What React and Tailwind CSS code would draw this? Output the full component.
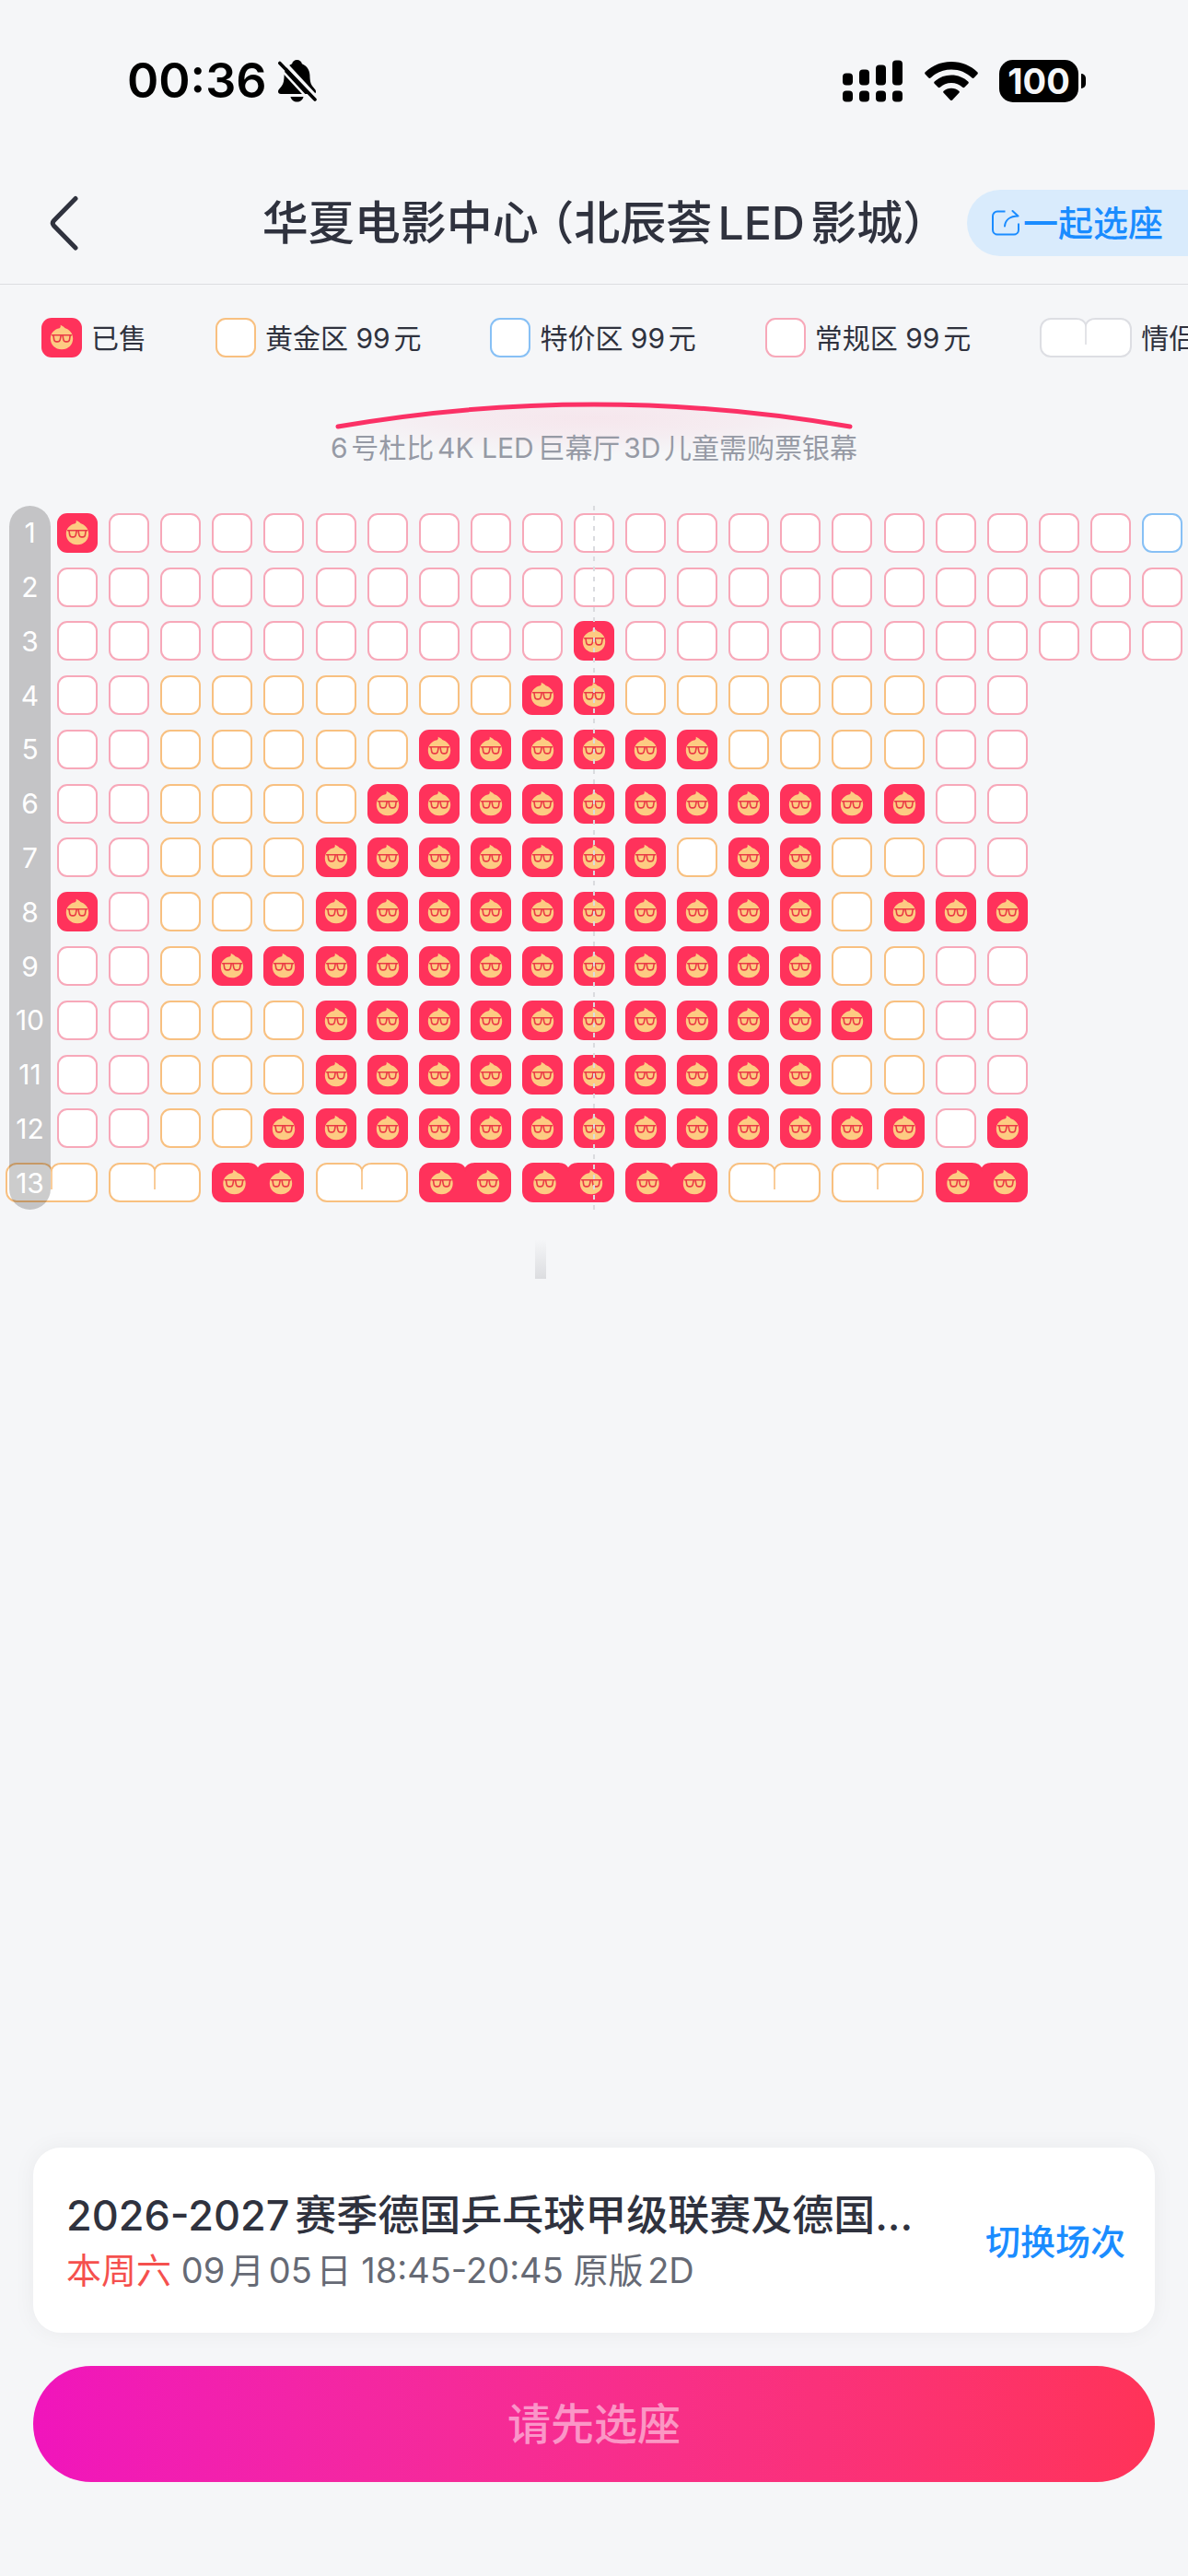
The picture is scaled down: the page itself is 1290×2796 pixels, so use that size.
import React, { useState } from 'react';
import clsx from 'clsx';

// n = regular, g = gold, s = special, x = sold
const ROWS = [
  'xnnnnnnnnnnnnnnnnnnnns',
  'nnnnnnnnnnnnnnnnnnnnnn',
  'nnnnnnnnnnxnnnnnnnnnnn',
  'nngggggggxxggggggnn',
  'nngggggxxxxxxggggnn',
  'nnggggxxxxxxxxxxxnn',
  'nngggxxxxxxxgxxggnn',
  'xngggxxxxxxxxxxgxxx',
  'nngxxxxxxxxxxxxggnn',
  'nngggxxxxxxxxxxxgnn',
  'nngggxxxxxxxxxxggnn',
  'nnggxxxxxxxxxxxxxnx',
];

// Last row holds couple seats, one letter for each pair
const COUPLE_ROW = 'ggxgxxxggx';

const SEAT_BORDER = {
  n: 'border-[#f7a8b9]',
  g: 'border-[#f8c080]',
  s: 'border-[#87c0f5]',
};

const SEAT_NAME = { n: '常规区', g: '黄金区', s: '特价区', x: '已售' };

const Face = ({ x = 0 }) => (
  <g transform={`translate(${x} 0)`}>
    <path
      d="M19.6 11.2C20.9 10.4 21 9.2 20.6 7.8C22.6 8.6 24.4 9.8 25.4 11.1C30 12.4 34.2 16.7 34.2 22.4C34.2 29.2 29 34.2 22.1 34.2C15.1 34.2 9.8 29.2 9.8 22.4C9.8 16.5 14.2 12.2 19.6 11.2Z"
      fill="#fdcb82"
    />
    <g fill="none" stroke="#ea3b46" strokeWidth="1.6" strokeLinejoin="round">
      <path d="M11.6 18.8H32.6" strokeLinecap="round" />
      <path d="M13 19L13.7 23.6Q14.1 25.9 16.4 25.9H17.6Q19.8 25.9 20.3 23.6L21.2 19" />
      <path d="M23 19L23.9 23.6Q24.4 25.9 26.6 25.9H27.8Q30.1 25.9 30.5 23.6L31.2 19" />
    </g>
  </g>
);

const Seat = ({ type, as: Tag = 'button', ...props }) => (
  <Tag
    className={clsx(
      'block h-[43px] w-11 shrink-0 overflow-hidden rounded-[11px]',
      type === 'x' ? 'bg-[#ff325b]' : 'border-2 bg-white',
      SEAT_BORDER[type]
    )}
    {...props}
  >
    {type === 'x' && (
      <svg viewBox="0 0 44 43" className="h-full w-full" aria-hidden="true">
        <Face />
      </svg>
    )}
  </Tag>
);

const CoupleShape = ({ sold, stroke }) => (
  <svg viewBox="0 0 100 43" className="h-[43px] w-[100px] shrink-0" aria-hidden="true">
    <path
      d="M12 1H39.500C45 1 48.500 3.500 50 7.500C51.500 3.500 55 1 60.500 1H88A11 11 0 0 1 99 12V31A11 11 0 0 1 88 42H12A11 11 0 0 1 1 31V12A11 11 0 0 1 12 1Z"
      fill={sold ? '#ff325b' : '#fff'}
      stroke={sold ? '#ff325b' : stroke}
      strokeWidth="2"
    />
    {sold ? (
      <>
        <Face x={2.5} />
        <Face x={53} />
      </>
    ) : (
      <path d="M50 7V29" stroke={stroke} strokeWidth="1.600" />
    )}
  </svg>
);

const StatusBar = () => (
  <div className="flex h-[176px] items-center justify-between pr-[111px] pl-[138px] text-black">
    <div className="flex items-center gap-3">
      <span className="text-[52px] leading-none font-semibold">00:36</span>
      <svg viewBox="0 0 42 46" className="h-[46px] w-[42px]" aria-label="静音">
        <path
          d="M20.500 0C17.700 0 15.600 1.700 15.100 4.200C10 6.400 6.800 10.700 6.600 16.500C6.400 23 5.900 26 3.200 29.200C1.400 31.300 0 32.500 0 34.300C0 36 1.200 37 3 37H38C40 37 41 36 41 34.300C41 32.500 39.500 31.300 37.800 29.200C35.100 26 34.600 23 34.400 16.500C34.200 10.700 31 6.400 25.900 4.200C25.400 1.700 23.300 0 20.500 0Z"
          fill="#000"
        />
        <path d="M13.500 40H27.500C26.800 43.500 24 45.500 20.500 45.500C17 45.500 14.200 43.500 13.500 40Z" fill="#000" />
        <path d="M4 0L44 43" stroke="#f5f6f8" strokeWidth="4" />
        <path d="M1.800 3.500L40 43" stroke="#000" strokeWidth="3.600" strokeLinecap="round" />
        <path d="M-2 5L36 46" stroke="#f5f6f8" strokeWidth="2.500" />
      </svg>
    </div>

    <div className="flex items-center gap-[23px]">
      <svg viewBox="0 0 66 46" className="h-[46px] w-[66px]" aria-label="信号">
        <rect x="0" y="14.500" width="11" height="13" rx="4" />
        <rect x="18" y="10.500" width="11" height="17" rx="4" />
        <rect x="36" y="5.500" width="11" height="22" rx="4" />
        <rect x="54" y="0.500" width="11" height="27" rx="4" />
        <rect x="0" y="33.500" width="11" height="12" rx="4" />
        <rect x="18" y="33.500" width="11" height="12" rx="4" />
        <rect x="36" y="33.500" width="11" height="12" rx="4" />
        <rect x="54" y="33.500" width="11" height="12" rx="4" />
      </svg>
      <svg viewBox="0 0 58 43" className="h-[43px] w-[58px]" aria-label="Wi-Fi">
        <path d="M29 0C40.500 0 50.300 4.400 57.300 11.300C58 12 58 12.800 57.400 13.500L53.600 17.500C53 18.100 52.200 18.100 51.500 17.500C45.500 11.800 37.800 8.500 29 8.500C20.200 8.500 12.500 11.800 6.500 17.500C5.800 18.100 5 18.100 4.400 17.500L0.600 13.500C0 12.800 0 12 0.700 11.300C7.700 4.400 17.500 0 29 0Z" />
        <path d="M29 14.500C36.300 14.500 42.500 17.200 47.200 21.500C48 22.200 48 23 47.300 23.700L43.300 27.800C42.700 28.400 41.900 28.400 41.200 27.800C37.900 24.900 33.800 23 29 23C24.200 23 20.100 24.900 16.800 27.800C16.100 28.400 15.300 28.400 14.700 27.800L10.700 23.700C10 23 10 22.200 10.800 21.500C15.500 17.200 21.700 14.500 29 14.500Z" />
        <path d="M29 28.800C32.200 28.800 35 29.900 37.300 31.700C38 32.300 38 33 37.400 33.700L30.200 41.500C29.400 42.300 28.600 42.300 27.800 41.500L20.600 33.700C20 33 20 32.300 20.700 31.700C23 29.900 25.800 28.800 29 28.800Z" />
      </svg>
      <div className="flex items-center gap-[3px]">
        <span className="flex h-[46px] w-[86px] items-center justify-center rounded-[15px] bg-black text-[38px] leading-none font-bold text-[#f5f6f8]">
          100
        </span>
        <span className="h-4 w-[5px] rounded-r-full bg-black" />
      </div>
    </div>
  </div>
);

const NavBar = () => (
  <header className="flex h-[133px] items-center justify-between border-b border-[#dcdde1]">
    <div className="flex w-60 pl-[52px]">
      <button aria-label="返回">
        <svg viewBox="0 0 34 60" className="h-[60px] w-[34px]" fill="none">
          <path
            d="M30 3.500L6.500 27.500Q4 30.300 6.500 33L30 57"
            stroke="#2f323e"
            strokeWidth="5"
            strokeLinecap="round"
          />
        </svg>
      </button>
    </div>
    <h1 className="text-[50px] leading-[56px] font-medium whitespace-nowrap [font-feature-settings:'halt']">
      华夏电影中心 （北辰荟LED影城）
    </h1>
    <div className="flex w-60">
      <button className="flex h-[72px] flex-1 items-center gap-1 rounded-l-full bg-[#d9ebfc] pl-[27px] text-[38px] leading-none font-medium whitespace-nowrap text-[#1a8cff]">
        <svg viewBox="0 0 30 28" className="h-7 w-[30px]" fill="none" stroke="#1a8cff" strokeWidth="2">
          <path d="M14.500 1.500H6A5 5 0 0 0 1 6.500V21.500A5 5 0 0 0 6 26.500H24A5 5 0 0 0 29 21.500V14.500" />
          <path d="M14 17.500C14.500 11.500 19 6.500 28.500 6.500M22.500 1L28.500 6.500" strokeLinecap="round" strokeLinejoin="round" />
        </svg>
        一起选座
      </button>
    </div>
  </header>
);

const LegendItem = ({ type, label }) => (
  <li className="flex shrink-0 items-center gap-2.5">
    {type === 'couple' ? <CoupleShape stroke="#dddee3" /> : <Seat type={type} as="span" />}
    <span>{label}</span>
  </li>
);

const Legend = () => (
  <ul className="flex h-[115px] items-center gap-[75px] overflow-hidden pl-[45px] text-[30px] leading-8 whitespace-nowrap">
    <LegendItem type="x" label="已售" />
    <LegendItem type="g" label="黄金区 99元" />
    <LegendItem type="s" label="特价区 99元" />
    <LegendItem type="n" label="常规区 99元" />
    <LegendItem type="couple" label="情侣区 99元" />
  </ul>
);

const Screen = () => (
  <div className="relative flex h-[125px] justify-center">
    <svg viewBox="0 0 600 90" className="h-[90px] w-[600px]" fill="none" aria-hidden="true">
      <defs>
        <radialGradient id="glow" cx="0.5" cy="0.2" r="0.55">
          <stop offset="0" stopColor="#ff3268" stopOpacity="0.08" />
          <stop offset="0.5" stopColor="#ff3268" stopOpacity="0.05" />
          <stop offset="1" stopColor="#ff3268" stopOpacity="0" />
        </radialGradient>
      </defs>
      <path d="M22 39Q300 -9 578 39L596 88H4Z" fill="url(#glow)" />
      <path d="M22 39Q300 -9 578 39" stroke="#fb3166" strokeWidth="5" strokeLinecap="round" />
    </svg>
    <p className="absolute inset-x-0 top-[46px] text-center text-[30px] leading-8 text-[#969aa5]">
      6号杜比4K LED巨幕厅3D儿童需购票银幕
    </p>
  </div>
);

const SeatMap = ({ selected, onToggle }) => (
  <section className="relative grid h-[764px] auto-rows-fr" aria-label="座位图">
    {ROWS.map((row, r) => (
      <div key={r} className="grid grid-cols-23 items-center justify-items-center">
        <span />
        {row.split('').map((type, c) => (
          <Seat
            key={c}
            type={type}
            disabled={type === 'x'}
            aria-pressed={selected === `${r}-${c}`}
            aria-label={`${r + 1}排${c + 1}座 ${SEAT_NAME[type]}`}
            onClick={() => onToggle(`${r}-${c}`)}
          />
        ))}
      </div>
    ))}
    <div className="grid grid-cols-23 items-center justify-items-center">
      {COUPLE_ROW.split('').map((type, c) => (
        <button key={c} className="col-span-2" disabled={type === 'x'} aria-label={`13排 情侣座${c + 1}`}>
          <CoupleShape sold={type === 'x'} stroke="#f8c080" />
        </button>
      ))}
    </div>

    {/* Centre line of the hall */}
    <div className="pointer-events-none absolute inset-y-0 left-1/2 w-0.5 -translate-x-1/2 bg-[repeating-linear-gradient(#dadbdf_0_5px,transparent_5px_11px)]" />

    {/* Row numbers stay on top of the seats */}
    <ol className="pointer-events-none absolute inset-y-0 left-2.5 grid w-[45px] auto-rows-fr items-center rounded-full bg-black/20 text-center text-[30px] leading-none text-white">
      {Array.from({ length: 13 }, (_, i) => (
        <li key={i}>{i + 1}</li>
      ))}
    </ol>
  </section>
);

const SessionCard = () => (
  <div className="flex items-center justify-between rounded-[30px] bg-white pt-12 pr-8 pb-11 pl-9 shadow-[0_0_24px_rgba(0,0,0,0.05)]">
    <div className="min-w-0">
      <h2 className="text-[45px] leading-[52px] font-medium whitespace-nowrap">
        2026-2027赛季德国乒乓球甲级联赛及德国...
      </h2>
      <p className="pt-2.5 text-[38px] leading-[47px] whitespace-nowrap text-[#666a75]">
        <span className="text-[#f5504e]">本周六</span> 09月05日 18:45-20:45 原版2D
      </p>
    </div>
    <button className="shrink-0 text-[38px] font-medium text-[#1a8cff]">切换场次</button>
  </div>
);

const App = () => {
  const [selected, setSelected] = useState(null);

  const handleToggle = (id) => {
    setSelected(selected === id ? null : id);
  };

  return (
    <div className="flex min-h-screen flex-col overflow-hidden bg-[#f5f6f8] font-[Inter,'Noto_Sans_CJK_SC',sans-serif] text-[#2f323e] [text-autospace:normal]">
      <StatusBar />
      <NavBar />
      <main className="flex flex-1 flex-col">
        <Legend />
        <Screen />
        <SeatMap selected={selected} onToggle={handleToggle} />
        <div className="mx-auto mt-8 flex w-32">
          <span className="h-[43px] w-3 bg-linear-to-b from-transparent to-[#dcdde0]" />
        </div>
      </main>
      <footer className="flex flex-col gap-9 px-9 pb-[102px]">
        <SessionCard />
        <button className="h-[126px] rounded-full bg-linear-to-r from-[#f014bc] to-[#ff3358] text-[47px] font-medium text-white/50">
          请先选座
        </button>
      </footer>
    </div>
  );
};

export default App;
